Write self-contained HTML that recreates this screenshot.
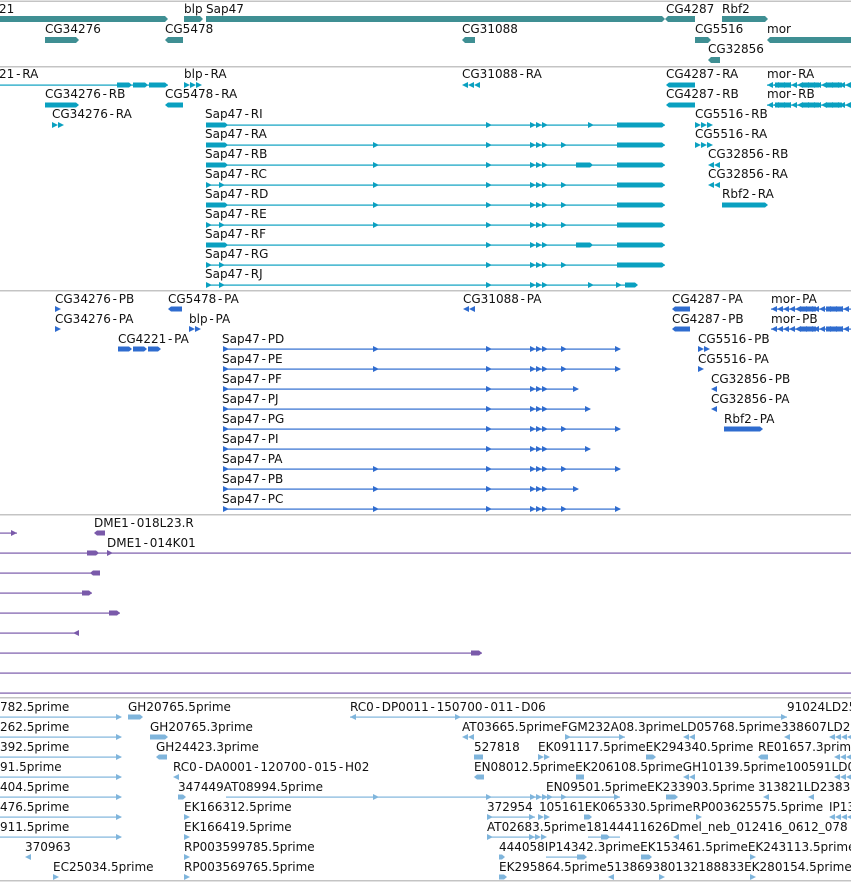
<!DOCTYPE html>
<html><head><meta charset="utf-8"><style>
html,body{margin:0;padding:0;background:#fff;width:851px;height:882px;overflow:hidden}
svg{display:block}
text{font-family:"DejaVu Sans",sans-serif;font-size:12px;fill:#111}
</style></head><body>
<svg id="s" width="851" height="882" xmlns="http://www.w3.org/2000/svg"></svg>
<script>
var o='';
function L(a,b,y,c){o+='<rect x="'+a+'" y="'+(y-0.5)+'" width="'+(b-a)+'" height="1.2" fill="'+c+'"/>';}
function A(x,y,c,d){ if(d<0){o+='<polygon points="'+(x+6)+','+(y-3)+' '+x+','+y+' '+(x+6)+','+(y+3)+'" fill="'+c+'"/>';}
 else o+='<polygon points="'+x+','+(y-3)+' '+(x+6)+','+y+' '+x+','+(y+3)+'" fill="'+c+'"/>';}
function E(a,b,y,c,d,h){h=h||5;var t=y-h/2,u=y+h/2,p=3;
 if(d>0)o+='<polygon points="'+a+','+t+' '+(b-p)+','+t+' '+b+','+y+' '+(b-p)+','+u+' '+a+','+u+'" fill="'+c+'"/>';
 else if(d<0)o+='<polygon points="'+(a+p)+','+t+' '+b+','+t+' '+b+','+u+' '+(a+p)+','+u+' '+a+','+y+'" fill="'+c+'"/>';
 else o+='<rect x="'+a+'" y="'+t+'" width="'+(b-a)+'" height="'+h+'" fill="'+c+'"/>';}
function T(x,y,s){var p=s.split('-'),h=p[0];for(var i=1;i<p.length;i++)h+='<tspan dx="1.8">-</tspan><tspan dx="1.8">'+p[i]+'</tspan>';o+='<text x="'+x+'" y="'+y+'">'+h+'</text>';}
function H(y,c){o+='<rect x="0" y="'+y+'" width="851" height="1.5" fill="'+(c||'#c4c4c4')+'"/>';}
function AA(a,b,y,c,d){for(var x=a;x<b-3;x+=6)A(x,y,c,d);}
H(0.5);H(66);H(290);H(514);H(880);
var g='#3f8f93';
T(-1,13,'21');T(184,13,'blp');T(206,13,'Sap47');T(666,13,'CG4287');T(722,13,'Rbf2');
E(0,168,19,g,1,6);E(184,203,19,g,1,6);E(206,665,19,g,1,6);E(665,695,19,g,-1,6);E(722,768,19,g,1,6);
T(45,33,'CG34276');E(45,79,40,g,1,6);T(165,33,'CG5478');E(165,183,40,g,-1,6);T(462,33,'CG31088');E(462,475,40,g,-1,6);
T(695,33,'CG5516');E(695,711,40,g,1,6);T(767,33,'mor');E(767,851,40,g,-1,6);
T(708,53,'CG32856');E(708,720,60,g,-1,6);
var c='#0aa0c0';
function ry(k){return 85+20*k;} function rb(k){return 78+20*k;}
T(-1,rb(0),'21-RA');L(0,168,ry(0),c);E(117,132,ry(0),c,1);E(133,148,ry(0),c,1);E(149,168,ry(0),c,1);
T(184,rb(0),'blp-RA');AA(184,203,ry(0),c,1);T(462,rb(0),'CG31088-RA');AA(462,478,ry(0),c,-1);
T(666,rb(0),'CG4287-RA');E(666,695,ry(0),c,-1);
function mor(y,x){L(x,851,y,c);AA(x,851,y,c,-1);E(x+8,x+24,y,c,0);E(x+36,x+52,y,c,0);E(x+60,x+75,y,c,0);}
T(767,rb(0),'mor-RA');mor(ry(0),767);
T(45,rb(1),'CG34276-RB');E(45,79,ry(1),c,1);T(165,rb(1),'CG5478-RA');E(165,183,ry(1),c,-1);
T(666,rb(1),'CG4287-RB');E(666,695,ry(1),c,-1);T(767,rb(1),'mor-RB');mor(ry(1),767);
T(52,rb(2),'CG34276-RA');AA(52,65,ry(2),c,1);
T(695,rb(2),'CG5516-RB');AA(695,711,ry(2),c,1);T(695,rb(3),'CG5516-RA');AA(695,711,ry(3),c,1);
T(708,rb(4),'CG32856-RB');AA(708,721,ry(4),c,-1);T(708,rb(5),'CG32856-RA');AA(708,721,ry(5),c,-1);
T(722,rb(6),'Rbf2-RA');E(722,768,ry(6),c,1);
var R=[['RI',1,0,589,0],['RA',1,1,562,0],['RB',1,1,0,1],['RC',0,1,562,0],['RD',1,1,562,0],['RE',0,1,562,0],['RF',1,0,0,1],['RG',0,0,562,0],['RJ',0,0,589,2]];
R.forEach(function(r,i){var k=i+2,y=ry(k);T(205,rb(k),'Sap47-'+r[0]);
 L(206,r[4]==2?637:665,y,c);
 if(r[1])E(206,228,y,c,1);else{A(206,y,c,1);A(219,y,c,1);}
 if(r[2])A(373,y,c,1);A(486,y,c,1);A(530,y,c,1);A(536,y,c,1);A(542,y,c,1);
 if(r[3])A(r[3]-1,y,c,1);
 if(r[4]==1)E(576,593,y,c,1);
 if(r[4]==2){A(616,y,c,1);E(625,638,y,c,1);}else E(617,665,y,c,1);
});
var b='#2f6ccf';
function py(k){return 309+20*k;} function pb(k){return 303+20*k;}
T(55,pb(0),'CG34276-PB');A(55,py(0),b,1);T(168,pb(0),'CG5478-PA');E(168,182,py(0),b,-1);
T(463,pb(0),'CG31088-PA');AA(463,478,py(0),b,-1);T(672,pb(0),'CG4287-PA');E(672,690,py(0),b,-1);
T(771,pb(0),'mor-PA');L(771,851,py(0),b);AA(771,851,py(0),b,-1);E(800,816,py(0),b,0);E(826,842,py(0),b,0);
T(55,pb(1),'CG34276-PA');A(55,py(1),b,1);T(189,pb(1),'blp-PA');AA(189,202,py(1),b,1);
T(672,pb(1),'CG4287-PB');E(672,690,py(1),b,-1);
T(771,pb(1),'mor-PB');L(771,851,py(1),b);AA(771,851,py(1),b,-1);E(800,816,py(1),b,0);E(826,842,py(1),b,0);
T(118,pb(2),'CG4221-PA');E(118,132,py(2),b,1);E(133,147,py(2),b,1);E(148,161,py(2),b,1);
T(698,pb(2),'CG5516-PB');AA(698,709,py(2),b,1);T(698,pb(3),'CG5516-PA');A(698,py(3),b,1);
T(711,pb(4),'CG32856-PB');A(711,py(4),b,-1);T(711,pb(5),'CG32856-PA');A(711,py(5),b,-1);
T(724,pb(6),'Rbf2-PA');E(724,763,py(6),b,1);
var P=[['PD',1,562,620],['PE',1,562,620],['PF',0,0,578],['PJ',0,0,590],['PG',0,562,620],['PI',0,0,590],['PA',1,562,620],['PB',1,0,578],['PC',1,562,620]];
P.forEach(function(r,i){var k=i+2,y=py(k);T(222,pb(k),'Sap47-'+r[0]);L(223,r[3],y,b);A(223,y,b,1);
 if(r[1])A(373,y,b,1);A(486,y,b,1);A(530,y,b,1);A(536,y,b,1);A(542,y,b,1);if(r[2])A(r[2]-1,y,b,1);A(r[3]-5,y,b,1);});
var p='#7a5aaa';
T(94,527,'DME1-018L23.R');L(0,17,533,p);A(11,533,p,1);E(94,105,533,p,-1);
T(107,547,'DME1-014K01');L(0,851,553,p);E(87,99,553,p,1);A(107,553,p,1);
L(0,100,573,p);E(90,100,573,p,-1);
L(0,92,593,p);E(82,92,593,p,1);
L(0,120,613,p);E(109,120,613,p,1);
L(0,78,633,p);A(73,633,p,-1);
L(0,482,653,p);E(471,482,653,p,1);
L(0,851,673,p);L(0,851,693,p);H(697);
var e='#7fb5dc';
function ey(k){return 717+20*k;} function eb(k){return 711+20*k;}
['782.5prime','262.5prime','392.5prime','91.5prime','404.5prime','476.5prime','911.5prime'].forEach(function(s,k){T(0,eb(k),s);L(0,121,ey(k),e);A(116,ey(k),e,1);});
T(25,eb(7),'370963');A(25,ey(7),e,-1);T(53,eb(8),'EC25034.5prime');AA(53,62,ey(8),e,1);
T(128,eb(0),'GH20765.5prime');E(128,143,ey(0),e,1);
T(350,eb(0),'RC0-DP0011-150700-011-D06');L(350,787,ey(0),e);A(350,ey(0),e,-1);A(455,ey(0),e,1);A(781,ey(0),e,1);
T(787,eb(0),'91024LD25');
T(150,eb(1),'GH20765.3prime');E(150,168,ey(1),e,1);
T(462,eb(1),'AT03665.5primeFGM232A08.3primeLD05768.5prime338607LD2');AA(462,477,ey(1),e,-1);L(565,625,ey(1),e);A(565,ey(1),e,1);A(619,ey(1),e,1);AA(683,698,ey(1),e,-1);A(784,ey(1),e,-1);AA(829,851,ey(1),e,-1);
T(156,eb(2),'GH24423.3prime');E(156,167,ey(2),e,-1);
T(474,eb(2),'527818');E(474,483,ey(2),e,0);T(538,eb(2),'EK091117.5primeEK294340.5prime');AA(538,550,ey(2),e,1);E(646,656,ey(2),e,1);
T(758,eb(2),'RE01657.3prime');E(758,768,ey(2),e,-1);AA(834,851,ey(2),e,-1);
T(173,eb(3),'RC0-DA0001-120700-015-H02');A(173,ey(3),e,-1);
T(474,eb(3),'EN08012.5primeEK206108.5primeGH10139.5prime100591LD0');E(474,484,ey(3),e,-1);E(576,584,ey(3),e,0);AA(683,698,ey(3),e,-1);AA(834,851,ey(3),e,-1);
T(178,eb(4),'347449AT08994.5prime');E(178,186,ey(4),e,1);L(226,620,ey(4),e);A(373,ey(4),e,1);A(486,ey(4),e,1);A(530,ey(4),e,1);A(536,ey(4),e,1);A(542,ey(4),e,1);A(547,ey(4),e,1);A(561,ey(4),e,1);A(614,ey(4),e,1);
T(546,eb(4),'EN09501.5primeEK233903.5prime');E(666,678,ey(4),e,1);T(758,eb(4),'313821LD2383');A(763,ey(4),e,-1);A(808,ey(4),e,-1);
T(184,eb(5),'EK166312.5prime');AA(184,193,ey(5),e,1);
T(487,eb(5),'372954');L(487,535,ey(5),e);A(487,ey(5),e,1);A(529,ey(5),e,1);AA(538,550,ey(5),e,1);
T(539,eb(5),'105161EK065330.5primeRP003625575.5prime');E(584,592,ey(5),e,1);A(696,ey(5),e,1);T(829,eb(5),'IP13');AA(829,851,ey(5),e,-1);
T(184,eb(6),'EK166419.5prime');A(184,ey(6),e,1);
T(487,eb(6),'AT02683.5prime18144411626Dmel_neb_012416_0612_078');L(487,535,ey(6),e);A(487,ey(6),e,1);AA(529,550,ey(6),e,1);L(588,620,ey(6),e);E(601,610,ey(6),e,1);A(673,ey(6),e,-1);
T(184,eb(7),'RP003599785.5prime');A(184,ey(7),e,1);
T(499,eb(7),'444058IP14342.3primeEK153461.5primeEK243113.5prime');E(499,505,ey(7),e,1);L(546,577,ey(7),e);E(577,587,ey(7),e,1);E(641,652,ey(7),e,1);A(750,ey(7),e,1);
T(184,eb(8),'RP003569765.5prime');A(184,ey(8),e,1);
T(499,eb(8),'EK295864.5prime513869380132188833EK280154.5prime');E(499,507,ey(8),e,1);A(608,ey(8),e,-1);A(659,ey(8),e,1);A(750,ey(8),e,1);
document.getElementById('s').innerHTML=o;
</script>
</body></html>
